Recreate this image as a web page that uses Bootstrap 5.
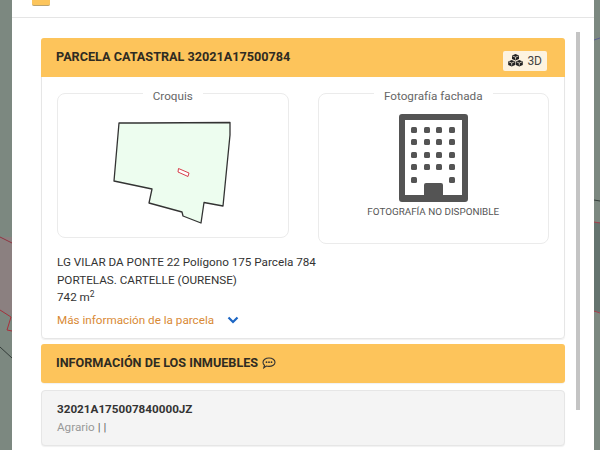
<!DOCTYPE html>
<html lang="es">
<head>
  <meta charset="UTF-8">
  <meta name="viewport" content="width=device-width, initial-scale=1.0">
  <title>Parcela catastral</title>
  <link href="https://cdn.jsdelivr.net/npm/bootstrap@5.3.0/dist/css/bootstrap.min.css" rel="stylesheet">
  <style>
    html, body { height: 450px; overflow: hidden; }
    body {
      font-family: Roboto, "Liberation Sans", sans-serif;
      font-size: 11.7px;
      color: #333;
      background: #7c8880;
    }
    .map-bg { position: absolute; top: 0; left: 0; width: 600px; height: 450px; }
    .sheet {
      position: relative;
      height: 450px;
      margin: 0 6px 0 12px;
      background: #fff;
      overflow: hidden;
    }
    .sheet-top { height: 18px; border-bottom: 1px solid #e5e5e5; padding-left: 20px; }
    .top-tab { width: 18px; height: 6px; background: #fcc55c; border-bottom: 1px solid #b9a26f; border-radius: 0 0 2px 2px; }
    .sheet-scroll { position: absolute; top: 32px; left: 564px; width: 4px; height: 378px; background: #c4c4c4; }
    .sheet-body { padding: 20px 29px 0 29px; }
    .panel { border: 1px solid #e6e6e6; border-radius: 4px; margin-bottom: 5px; box-shadow: 0 1px 1px rgba(0,0,0,.06); }
    .panel-head {
      height: 39px;
      background: #fdc45b;
      border-radius: 3px;
      padding: 0 18px 0 15px;
      font-size: 12.65px;
      font-weight: 700;
      color: #2f2b22;
    }
    .top-head { border-radius: 3px 3px 0 0; margin: -1px -1px 0 -1px; }
    .btn-3d {
      height: 20px;
      margin-top: 6px;
      padding: 0 5px;
      border-radius: 2px;
      background: #fdf3e0;
      color: #444;
      font-weight: 400;
      font-size: 12px;
      gap: 4px;
    }
    .photo-cols { padding: 4px 15px 0 15px; gap: 29px; }
    .photo-box {
      width: 232px;
      margin: 0;
      padding: 0;
      border: 1px solid #ebebeb;
      border-radius: 8px;
    }
    .photo-box legend {
      float: none;
      width: auto;
      margin: 0 auto;
      padding: 6px 10px 0 10px;
      font-size: 11.7px;
      line-height: 18px;
      color: #666;
      text-align: center;
    }
    .sketch-box { height: 157px; }
    .facade-box { height: 163px; }
    .sketch-box svg { display: block; margin: 13px 0 0 52px; }
    .facade-box svg { display: block; margin: 9px auto 0 auto; }
    .no-photo { font-size: 9.85px; color: #555; text-align: center; line-height: 12px; margin-top: 4px; }
    .parcel-text { padding: 10px 15px 0 15px; line-height: 17.5px; color: #333; }
    .parcel-text sup { font-size: 8.5px; top: -.5em; }
    .more-link { padding: 4px 15px 9px 15px; color: #d98a35; line-height: 18px; gap: 13px; }
    .estate-gap { margin-bottom: 7px; }
    .estate-row {
      height: 56px;
      background: #f4f4f4;
      padding: 9px 15px;
      line-height: 18px;
    }
    .estate-ref { font-weight: 700; color: #333; }
    .estate-use { color: #999; }
    .estate-use span { color: #666; }
  </style>
</head>
<body>

<!-- mapa detras del modal -->
<svg class="map-bg" viewBox="0 0 600 450" fill="none">
  <path d="M0 237H12V315L0 310Z" fill="#8b8080"/>
  <path d="M594 222H600V312H594Z" fill="#65746f"/>
  <path d="M0 237L12 243" stroke="#8f3540"/>
  <path d="M0 310L11 317L7 330L12 331" stroke="#a8303c"/>
  <path d="M0 347L12 358" stroke="#333c38"/>
  <path d="M594 40L600 38" stroke="#5a5f90"/>
  <path d="M594 200L600 201" stroke="#333c38"/>
  <path d="M594 222L600 223" stroke="#a8404c"/>
  <path d="M594 311L600 313" stroke="#a8404c"/>
</svg>

<div class="sheet">
  <div class="sheet-top"><div class="top-tab"></div></div>
  <div class="sheet-scroll"></div>

  <div class="sheet-body">
    <div class="panel">
      <div class="panel-head top-head d-flex align-items-center justify-content-between">
        <span>PARCELA CATASTRAL 32021A17500784</span>
        <span class="btn-3d d-flex align-items-center">
          <svg width="15" height="13" viewBox="0 0 15 13" fill="#222">
            <path d="M7.5 0L11 1.5V5L7.5 6.5L4 5V1.5Z"/>
            <path d="M3.7 6L7.2 7.5V11L3.7 12.5L.2 11V7.5Z"/>
            <path d="M11.3 6L14.8 7.5V11L11.3 12.5L7.8 11V7.5Z"/>
            <path d="M4.5 2L7.5 3.2L10.5 2M7.500 3.200V5.500M1 7.900L3.700 9L6.400 7.900M3.700 9V11.500M8.600 7.900L11.300 9L14 7.900M11.300 9V11.500" stroke="#fdf3e0" stroke-width=".7" fill="none"/>
          </svg>
          3D
        </span>
      </div>

      <div class="photo-cols d-flex">
        <fieldset class="photo-box sketch-box">
          <legend>Croquis</legend>
          <svg width="125" height="110" viewBox="0 0 125 110">
            <path d="M9 5L30 5L120 4.500L120 17L113 88L94 84.500L91 105L73 98L72 94L39 85L42 71L4 63Z" fill="#edfdef" stroke="#333" stroke-width="1.300" stroke-linejoin="round"/>
            <path d="M68.500 50.500L79 55L78 58.500L68 54Z" fill="#fff" stroke="#d8404c"/>
          </svg>
        </fieldset>

        <fieldset class="photo-box facade-box">
          <legend>Fotografía fachada</legend>
          <svg width="69" height="88" viewBox="0 0 69 88" fill="#545454">
            <path fill-rule="evenodd" d="M3 0H66A3 3 0 0 1 69 3V85A3 3 0 0 1 66 88H3A3 3 0 0 1 0 85V3A3 3 0 0 1 3 0ZM6 6V81H25V71A2 2 0 0 1 27 69H42A2 2 0 0 1 44 71V81H63V6Z"/>
            <rect x="12" y="13" width="6" height="6" rx="1.500"/><rect x="25" y="13" width="6" height="6" rx="1.500"/><rect x="37" y="13" width="6" height="6" rx="1.500"/><rect x="50" y="13" width="6" height="6" rx="1.500"/>
            <rect x="12" y="25" width="6" height="6" rx="1.500"/><rect x="25" y="25" width="6" height="6" rx="1.500"/><rect x="37" y="25" width="6" height="6" rx="1.500"/><rect x="50" y="25" width="6" height="6" rx="1.500"/>
            <rect x="12" y="38" width="6" height="6" rx="1.500"/><rect x="25" y="38" width="6" height="6" rx="1.500"/><rect x="37" y="38" width="6" height="6" rx="1.500"/><rect x="50" y="38" width="6" height="6" rx="1.500"/>
            <rect x="12" y="50" width="6" height="6" rx="1.500"/><rect x="25" y="50" width="6" height="6" rx="1.500"/><rect x="37" y="50" width="6" height="6" rx="1.500"/><rect x="50" y="50" width="6" height="6" rx="1.500"/>
            <rect x="12" y="63" width="6" height="6" rx="1.500"/><rect x="50" y="63" width="6" height="6" rx="1.500"/>
          </svg>
          <div class="no-photo">FOTOGRAFÍA NO DISPONIBLE</div>
        </fieldset>
      </div>

      <div class="parcel-text">
        LG VILAR DA PONTE 22 Polígono 175 Parcela 784<br>
        PORTELAS. CARTELLE (OURENSE)<br>
        742 m<sup>2</sup>
      </div>
      <div class="more-link d-flex align-items-center">
        <span>Más información de la parcela</span>
        <svg width="12" height="8" viewBox="0 0 12 8" fill="none"><path d="M1.500 1.500L6 6L10.500 1.500" stroke="#1c66c4" stroke-width="2.200"/></svg>
      </div>
    </div>

    <div class="panel border-0 estate-gap">
      <div class="panel-head d-flex align-items-center gap-1">
        <span>INFORMACIÓN DE LOS INMUEBLES</span>
        <svg width="14" height="12" viewBox="0 0 14 12" fill="none">
          <path d="M7 1C10.300 1 13 2.800 13 5.200S10.300 9.400 7 9.400C6 9.400 5 9.200 4.300 9L1.800 10.800L2.500 8.200C1.500 7.500 1 6.400 1 5.200C1 2.800 3.700 1 7 1Z" stroke="#333" stroke-width="1.100"/>
          <circle cx="4.500" cy="5.200" r=".9" fill="#333"/><circle cx="7" cy="5.200" r=".9" fill="#333"/><circle cx="9.500" cy="5.200" r=".9" fill="#333"/>
        </svg>
      </div>
    </div>

    <div class="panel estate-row">
      <div class="estate-ref">32021A175007840000JZ</div>
      <div class="estate-use">Agrario <span>| |</span></div>
    </div>
  </div>
</div>

<script src="https://cdn.jsdelivr.net/npm/bootstrap@5.3.0/dist/js/bootstrap.bundle.min.js"></script>
</body>
</html>
